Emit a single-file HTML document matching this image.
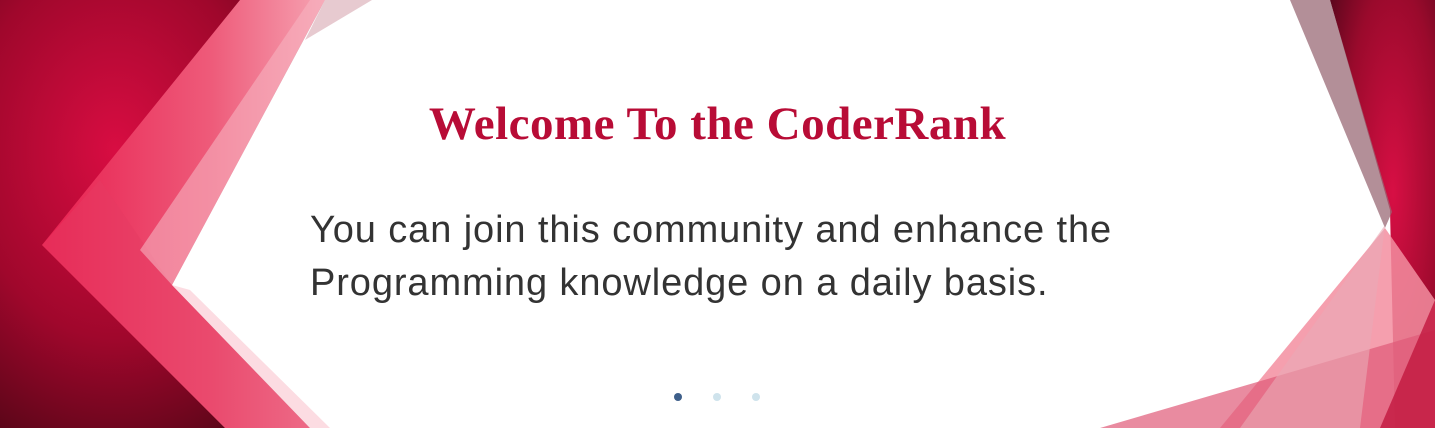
<!DOCTYPE html>
<html><head><meta charset="utf-8"><style>
html,body{margin:0;padding:0;width:1435px;height:428px;overflow:hidden;background:#fff}
svg{position:absolute;left:0;top:0}
h1{position:absolute;left:0;width:1435px;top:97px;margin:0;text-align:center;font:bold 47px "Liberation Serif",serif;color:#b80c36;letter-spacing:0.5px}
p{position:absolute;left:310px;top:204px;margin:0;font:38px/53px "Liberation Sans",sans-serif;letter-spacing:0.9px;color:#333;width:1000px}
.d{position:absolute;top:393px;width:8px;height:8px;border-radius:50%;background:#cfe3ec}
</style></head><body>
<svg width="1435" height="428" viewBox="0 0 1435 428">
<defs>
<radialGradient id="dr" cx="0.35" cy="0.35" r="0.8"><stop offset="0" stop-color="#d80d42"/><stop offset="0.55" stop-color="#a0072c"/><stop offset="1" stop-color="#4e0515"/></radialGradient>
<linearGradient id="pk" x1="0" y1="0" x2="1" y2="0"><stop offset="0" stop-color="#e81f4f"/><stop offset="0.6" stop-color="#ee5b7a"/><stop offset="1" stop-color="#f6a3b2"/></linearGradient>
<radialGradient id="dr2" cx="0.6" cy="0.45" r="0.8"><stop offset="0" stop-color="#d70f44"/><stop offset="0.6" stop-color="#9a0a2c"/><stop offset="1" stop-color="#50061a"/></radialGradient>
</defs>
<rect x="0" y="0" width="330" height="428" fill="url(#dr)"/>
<polygon points="240,0 42,245 225,428 310,428 172,285 325,0" fill="url(#pk)"/>
<polygon points="42,245 100,180 172,285 310,428 225,428" fill="#e53a62" opacity="0.5"/>
<polygon points="310,0 325,0 172,285 140,250" fill="#f7b3c0" opacity="0.6"/>
<polygon points="310,428 172,285 325,0 1435,0 1435,428" fill="#fff"/>
<polygon points="172,285 310,428 330,428 190,290" fill="#fbd3db" opacity="0.8"/>
<polygon points="325,0 372,0 305,40" fill="#e7cad0"/>
<polygon points="1330,0 1435,0 1435,428 1395,428 1390,210" fill="url(#dr2)"/>
<polygon points="1290,0 1330,0 1392,212 1385,228" fill="#9a6a75" opacity="0.75"/>
<polygon points="1385,228 1220,428 1435,428 1435,300" fill="#f38ea0" opacity="0.85"/>
<polygon points="1100,428 1435,330 1435,428" fill="#e05a78" opacity="0.7"/>
<polygon points="1240,428 1385,225 1360,428" fill="#eaaab6" opacity="0.6"/>
<polygon points="1380,428 1435,300 1435,428" fill="#c2163f" opacity="0.8"/>
</svg>
<h1>Welcome To the CoderRank</h1>
<p>You can join this community and enhance the<br>Programming knowledge on a daily basis.</p>
<div class="d" style="left:674px;background:#3e5f8a"></div>
<div class="d" style="left:713px"></div>
<div class="d" style="left:752px"></div>
</body></html>
